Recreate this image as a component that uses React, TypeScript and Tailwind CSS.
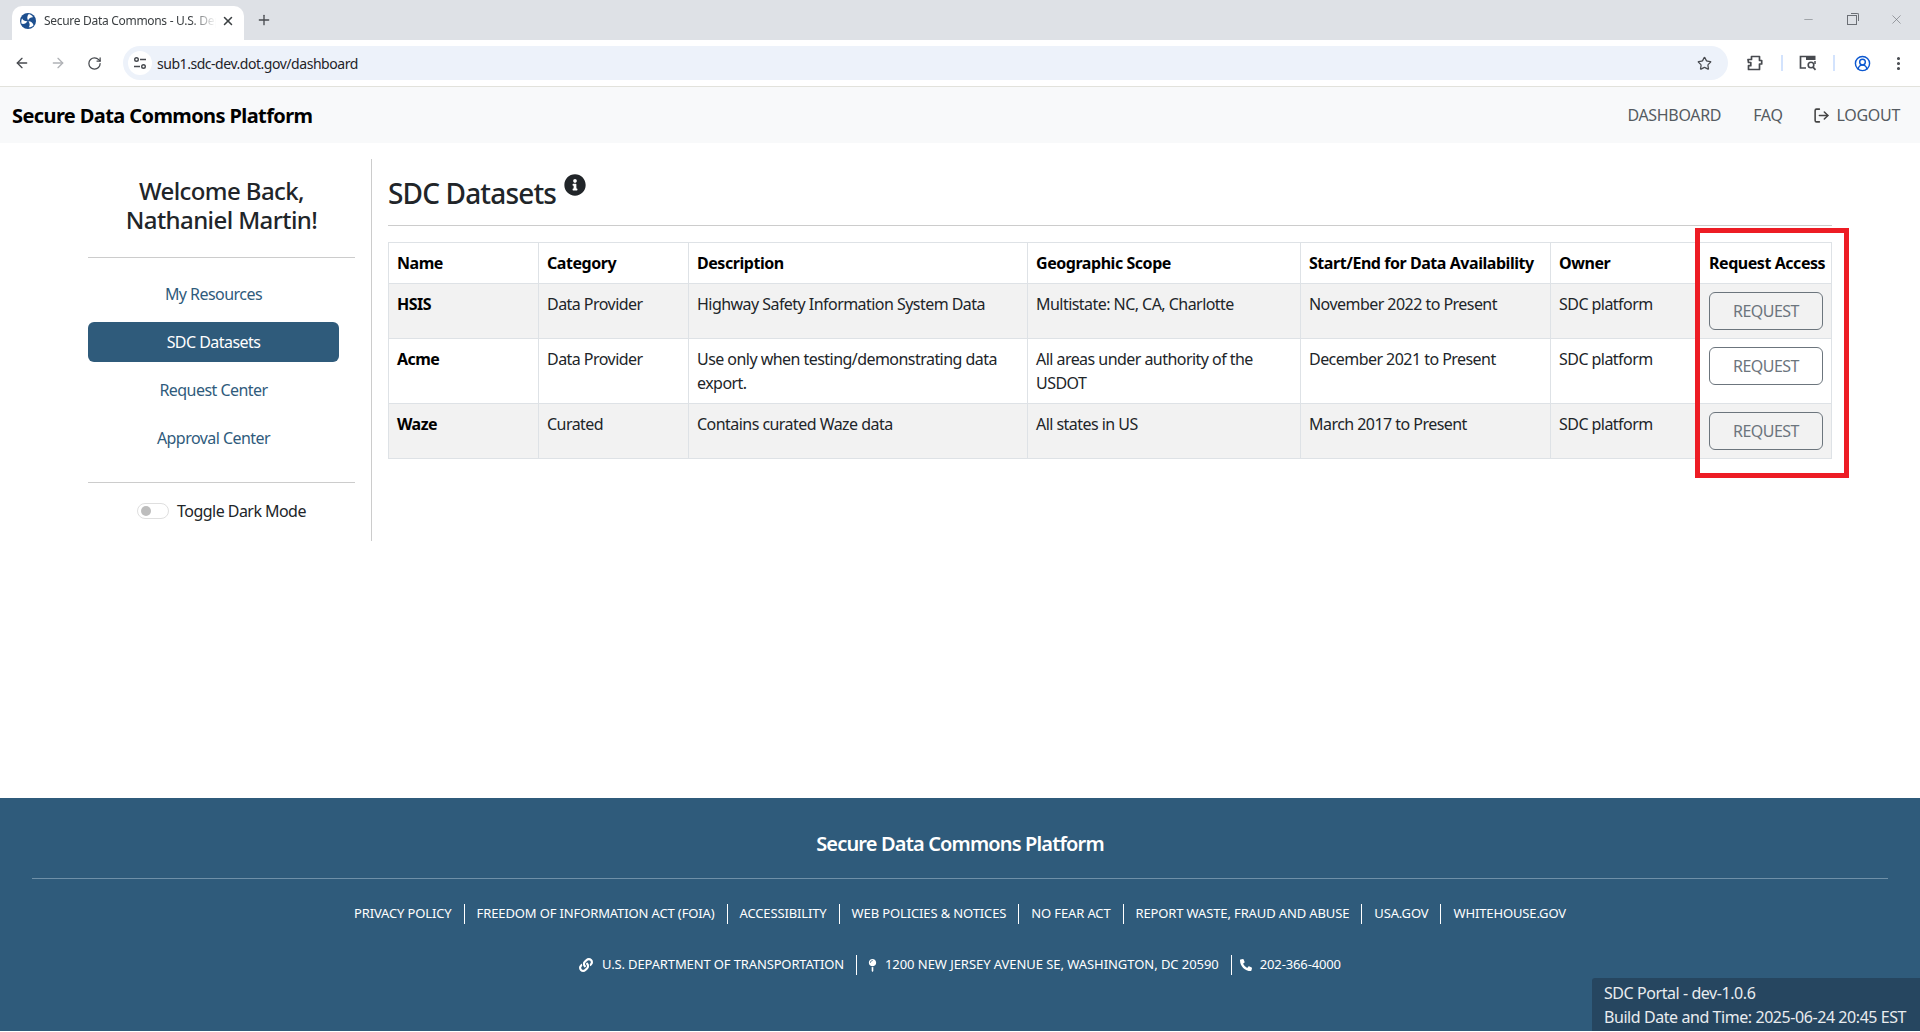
import React from "react";
import { ArrowLeft, ArrowRight, RotateCw, Star, Plus, X, Minus, MoreVertical, CircleUserRound, LogOut } from "lucide-react";
import { FaInfoCircle, FaLink, FaMapPin, FaPhoneAlt } from "react-icons/fa";

const rows = [
  { name: "HSIS", cat: "Data Provider", desc: "Highway Safety Information System Data", geo: "Multistate: NC, CA, Charlotte", avail: "November 2022 to Present", shade: true },
  { name: "Acme", cat: "Data Provider", desc: "Use only when testing/demonstrating data export.", geo: "All areas under authority of the USDOT", avail: "December 2021 to Present", shade: false },
  { name: "Waze", cat: "Curated", desc: "Contains curated Waze data", geo: "All states in US", avail: "March 2017 to Present", shade: true },
];
const links = ["PRIVACY POLICY", "FREEDOM OF INFORMATION ACT (FOIA)", "ACCESSIBILITY", "WEB POLICIES & NOTICES", "NO FEAR ACT", "REPORT WASTE, FRAUD AND ABUSE", "USA.GOV", "WHITEHOUSE.GOV"];
const th = "border border-[#dee2e6] py-2 text-left font-bold tracking-[-0.028em] text-black align-middle";
const td = "border border-[#dee2e6] py-2 align-top text-[#212529]";

function Favicon() {
  return (
    <svg width="16" height="16" viewBox="0 0 16 16" className="shrink-0">
      <circle cx="8" cy="8" r="8" fill="#1d4f8f" />
      {[0, 120, 240].map((a) => (
        <path key={a} transform={`rotate(${a} 8 8)`} d="M8 7.400C6.900 5.600 7 3 8.800 1.100 10.700 1.500 12.300 2.700 13 4.200 11 4 9.200 5 8 7.400z" fill="#fff" />
      ))}
    </svg>
  );
}

function SiteIcon() {
  return (
    <svg width="14" height="14" viewBox="0 0 14 14" fill="none" stroke="#474a4f" strokeWidth="1.4">
      <circle cx="3.500" cy="3.500" r="1.800" />
      <path d="M7 3.500h6M1 10.500h6" />
      <circle cx="10.500" cy="10.500" r="1.800" />
    </svg>
  );
}

function ExtensionIcon() {
  return (
    <svg width="18" height="18" viewBox="0 0 18 18" fill="none" stroke="#474a4f" strokeWidth="1.700" strokeLinejoin="round">
      <path d="M2 5.500h3.500V2.500h8v4h2.200v3.500h-2.200v5.500H2.500v-3.800h2.300V8.500H2.500z" />
    </svg>
  );
}

function SearchTabIcon() {
  return (
    <svg width="18" height="16" viewBox="0 0 18 16" fill="none">
      <path d="M7 1.500H1.500v11.500H7" stroke="#474a4f" strokeWidth="1.700" />
      <path d="M1.500 .7H16.500V5H7V.7z" fill="#474a4f" />
      <circle cx="12" cy="10" r="2.800" stroke="#474a4f" strokeWidth="1.600" />
      <path d="M14 12.200l2.500 2.600" stroke="#474a4f" strokeWidth="1.700" />
      <path d="M16 6v3" stroke="#474a4f" strokeWidth="1.500" />
    </svg>
  );
}

export default function App() {
  return (
    <div className="relative flex h-[1032px] w-[1920px] flex-col overflow-hidden bg-white font-['Noto_Sans','Open_Sans',sans-serif] text-[#212529]">
      {/* tab strip */}
      <div className="flex h-[40px] shrink-0 items-end bg-[#dee1e6] pl-[12px]">
        <div className="flex h-[34px] w-[232px] items-center rounded-t-[10px] bg-white pb-[5px] pl-[8px] pr-[8px]">
          <Favicon />
          <span className="ml-[8px] w-[172px] whitespace-nowrap overflow-hidden text-[12px] tracking-[-0.025em] text-[#3c4043] [mask-image:linear-gradient(to_right,black_85%,transparent)]">Secure Data Commons - U.S. Dep</span>
          <X size={14} strokeWidth={2.6} className="ml-[5px] text-[#3c4043]" />
        </div>
        <Plus size={16} strokeWidth={2} className="mb-[12px] ml-[12px] text-[#474a4f]" />
        <div className="ml-auto mb-[13px] flex items-center gap-[32px] pr-[16px] text-[#6b6f75]">
          <Minus size={13} strokeWidth={1} />
          <span className="relative h-[10px] w-[10px] border border-[#6b6f75]">
            <span className="absolute -right-[3px] -top-[3px] h-[8px] w-[8px] rounded-tr-[2px] border-r border-t border-[#6b6f75]" />
          </span>
          <X size={15} strokeWidth={1} />
        </div>
      </div>
      {/* toolbar */}
      <div className="flex h-[47px] shrink-0 items-center border-b border-[#e2e2dc] bg-white pl-[14px] pr-[10px]">
        <ArrowLeft size={16} strokeWidth={2} className="text-[#474a4f]" />
        <ArrowRight size={16} strokeWidth={2} className="ml-[20px] text-[#b0b2b6]" />
        <RotateCw size={15} strokeWidth={2} className="ml-[21px] text-[#474a4f]" />
        <div className="ml-[21px] flex h-[34px] w-[1605px] items-center rounded-full bg-[#edf2fa] pl-[5px] pr-[16px]">
          <div className="flex h-[24px] w-[24px] items-center justify-center rounded-full bg-white">
            <SiteIcon />
          </div>
          <span className="ml-[5px] text-[14px] tracking-[-0.033em] text-[#1f2328]">sub1.sdc-dev.dot.gov/dashboard</span>
          <Star size={15} strokeWidth={2} className="ml-auto text-[#474a4f]" />
        </div>
        <span className="ml-[18px]"><ExtensionIcon /></span>
        <div className="ml-[17px] h-[16px] w-[2px] bg-[#d3e3fd]" />
        <span className="ml-[16px]"><SearchTabIcon /></span>
        <div className="ml-[16px] h-[16px] w-[2px] bg-[#d3e3fd]" />
        <CircleUserRound size={17} strokeWidth={2} className="ml-[19px] text-[#0b57d0]" />
        <MoreVertical size={17} strokeWidth={2.4} className="ml-[19px] text-[#474a4f]" />
      </div>
      {/* app nav */}
      <header className="flex h-[56px] shrink-0 items-center justify-between bg-[#f8f9fa] pl-[12px] pr-[20px]">
        <span className="relative top-[1px] text-[20px] font-bold tracking-[-0.03em] text-black">Secure Data Commons Platform</span>
        <nav className="flex items-center text-[16px] tracking-[-0.02em] text-[#555b61]">
          <span>DASHBOARD</span>
          <span className="ml-[32px]">FAQ</span>
          <LogOut size={17} strokeWidth={2.2} className="ml-[30px] text-[#444]" />
          <span className="ml-[7px]">LOGOUT</span>
        </nav>
      </header>
      {/* main */}
      <main className="flex flex-1 items-start pl-[88px] pt-[16px] text-[16px] tracking-[-0.034em]">
        <aside className="flex h-[382px] w-[284px] flex-col border-r border-[#ccc] pr-[16px]">
          <h2 className="mt-[17px] text-center text-[24px] font-medium leading-[29px] tracking-[-0.025em] text-[#212529]">Welcome Back,<br />Nathaniel Martin!</h2>
          <hr className="mt-[23px] border-[#ccc]" />
          <div className="mt-[12px] mr-[16px] flex flex-col text-center">
            <a className="flex h-[48px] items-center justify-center text-[#2f5b7c]">My Resources</a>
            <a className="mt-[4px] flex h-[40px] items-center justify-center rounded-[6px] bg-[#2f5b7b] text-white">SDC Datasets</a>
            <a className="mt-[4px] flex h-[48px] items-center justify-center text-[#2f5b7c]">Request Center</a>
            <a className="flex h-[48px] items-center justify-center text-[#2f5b7c]">Approval Center</a>
          </div>
          <hr className="mt-[20px] border-[#ccc]" />
          <div className="mt-[16px] flex items-center justify-center">
            <span className="flex h-[16px] w-[32px] items-center rounded-full border border-[#dfdfdf] bg-white pl-[3px]">
              <span className="h-[10px] w-[10px] rounded-full bg-[#bdbdbd]" />
            </span>
            <span className="ml-[8px] text-[#212529]">Toggle Dark Mode</span>
          </div>
        </aside>
        <section className="ml-[16px] w-[1444px]">
          <div className="flex h-[67px] items-start border-b border-[#ccc] pt-[16px]">
            <h1 className="text-[28px] font-medium leading-[36px] tracking-[-0.03em] text-[#212529]">SDC Datasets</h1>
            <FaInfoCircle size={22} className="ml-[8px] -mt-[1px] text-[#212529]" />
          </div>
          <table className="mt-[16px] w-[1443px] table-fixed border-collapse">
            <colgroup>
              <col className="w-[150px]" />
              <col className="w-[150px]" />
              <col className="w-[339px]" />
              <col className="w-[273px]" />
              <col className="w-[250px]" />
              <col className="w-[147px]" />
              <col className="w-[134px]" />
            </colgroup>
            <thead>
              <tr className="h-[41px]">
                {["Name", "Category", "Description", "Geographic Scope", "Start/End for Data Availability", "Owner"].map((h) => (
                  <th key={h} className={th + " whitespace-nowrap px-2"}>{h}</th>
                ))}
                <th className={th + " whitespace-nowrap pl-[11px] pr-0"}>Request Access</th>
              </tr>
            </thead>
            <tbody>
              {rows.map((r) => (
                <tr key={r.name} className={r.shade ? "bg-[#f2f2f2]" : "bg-white"}>
                  <td className={td + " px-2 font-bold text-black"}>{r.name}</td>
                  <td className={td + " px-2"}>{r.cat}</td>
                  <td className={td + " px-2"}>{r.desc}</td>
                  <td className={td + " px-2"}>{r.geo}</td>
                  <td className={td + " px-2"}>{r.avail}</td>
                  <td className={td + " px-2"}>SDC platform</td>
                  <td className={td + " pl-[11px] pr-0"}>
                    <button className="flex h-[38px] w-[114px] items-center justify-center rounded-[6px] border border-[#6c757d] text-[#6c757d]">REQUEST</button>
                  </td>
                </tr>
              ))}
            </tbody>
          </table>
        </section>
      </main>
      {/* red highlight */}
      <div className="absolute left-[1695px] top-[228px] h-[250px] w-[154px] border-[5px] border-[#ed1c24]" />
      {/* footer */}
      <footer className="mb-[1px] flex h-[233px] shrink-0 flex-col items-center bg-[#2f5b7b] text-white">
        <div className="mt-[32px] text-[20px] font-semibold leading-[27px] tracking-[-0.042em]">Secure Data Commons Platform</div>
        <div className="mt-[21px] h-px w-[1856px] bg-[#6f90a8]" />
        <div className="mt-[25px] flex items-center text-[13px] tracking-[-0.01em]">
          {links.map((l, i) => (
            <span key={l} className={"flex h-[20px] items-center px-[12px] " + (i ? "border-l border-white" : "")}>{l}</span>
          ))}
        </div>
        <div className="mt-[31px] flex items-center text-[13px] tracking-[-0.01em]">
          <span className="flex h-[20px] items-center pr-[12px]"><FaLink size={14} className="mr-[9px]" />U.S. DEPARTMENT OF TRANSPORTATION</span>
          <span className="flex h-[20px] items-center border-l border-white pl-[9px] pr-[12px] tracking-[-0.004em]"><FaMapPin size={13} className="mr-[6px]" />1200 NEW JERSEY AVENUE SE, WASHINGTON, DC 20590</span>
          <span className="flex h-[20px] items-center border-l border-white pl-[8px]"><FaPhoneAlt size={12} className="mr-[8px]" />202-366-4000</span>
        </div>
      </footer>
      <div className="absolute bottom-[1px] right-0 h-[53px] w-[328px] rounded-tl-[3px] bg-[#264660] px-[12px] pt-[3px] text-[16px] leading-[24px] tracking-[-0.027em] text-[#e9ecef]">
        <div>SDC Portal - dev-1.0.6</div>
        <div className="whitespace-nowrap">Build Date and Time: 2025-06-24 20:45 EST</div>
      </div>
    </div>
  );
}
